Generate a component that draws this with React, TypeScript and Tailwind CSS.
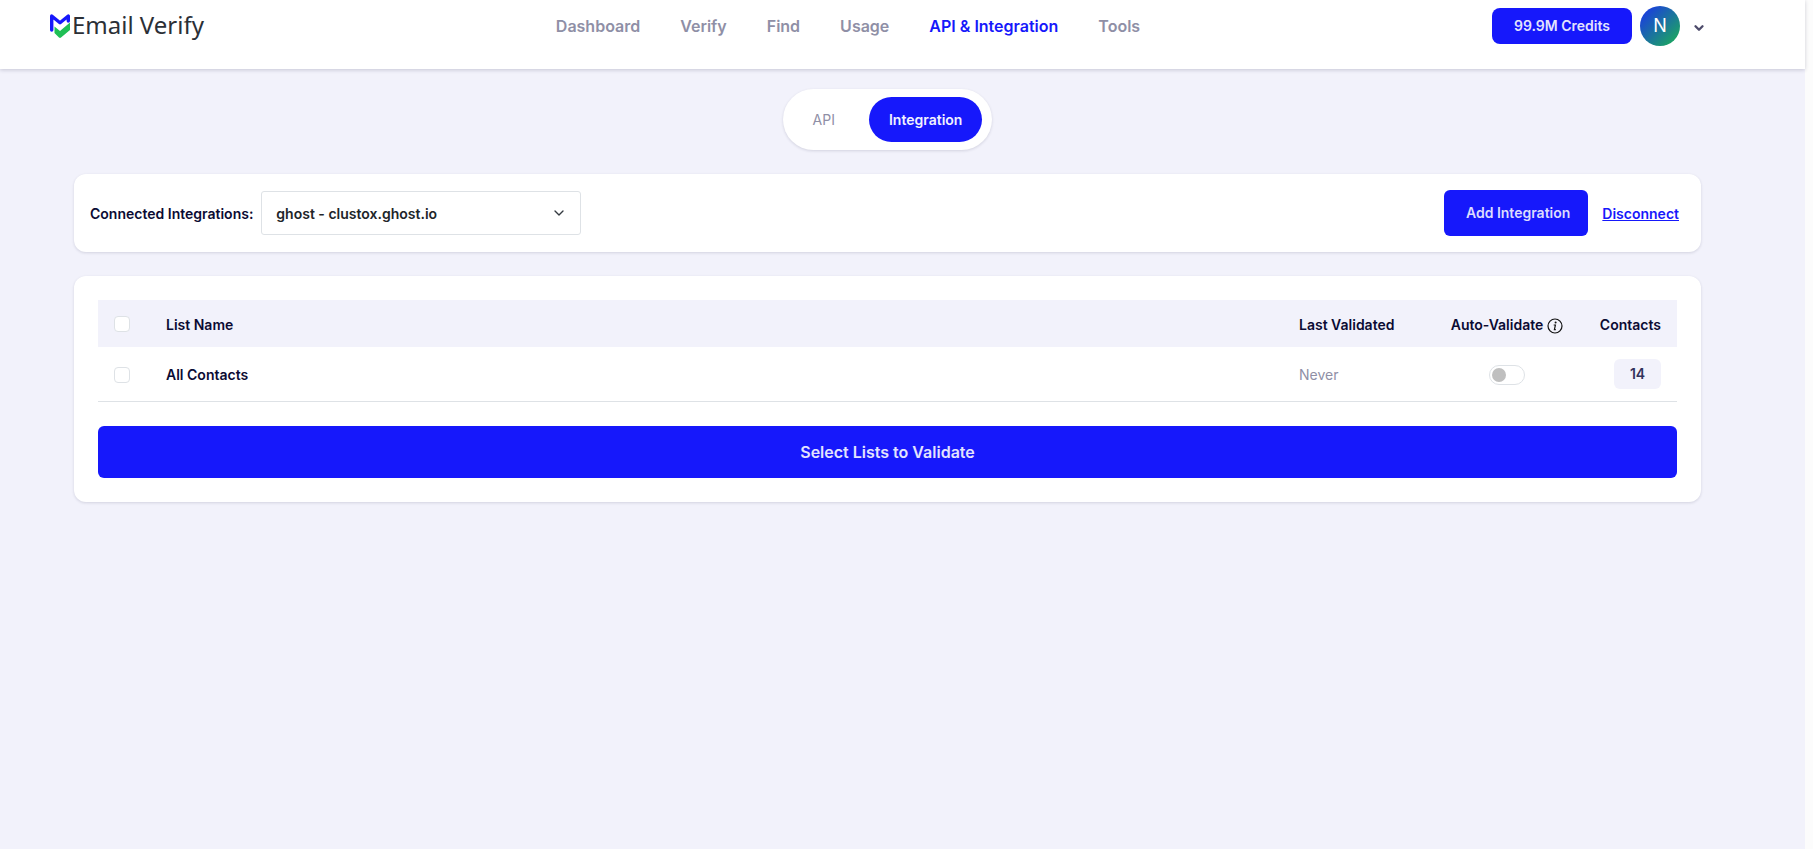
import { ChevronDown } from "lucide-react";
import { useState } from "react";

const navLinks = [
  { href: "#dashboard", label: "Dashboard" },
  { href: "#verify", label: "Verify" },
  { href: "#find", label: "Find" },
  { href: "#usage", label: "Usage" },
  { href: "#integration", label: "API & Integration", active: true },
  { href: "#tools", label: "Tools" },
];

const lists = [{ id: "all", name: "All Contacts", lastValidated: "Never", contacts: 14 }];

function Logo() {
  return (
    <a href="#home" className="flex items-start text-[#2b2f36]" aria-label="Email Verify">
      <svg width="22" height="26" viewBox="0 0 22 26" fill="none" aria-hidden="true" className="mt-px">
        <path
          d="M1.700 17V3L10 9.700L18.300 3V8"
          stroke="#1618fb"
          strokeWidth="3.400"
          strokeLinejoin="round"
          strokeLinecap="round"
        />
        <path d="M4.500 13.500L10 18L20 9.500V17L11 24.600Q10 25.400 9 24.600L4.500 20Z" fill="#1fbf55" />
      </svg>
      <span className="font-['Noto_Sans',sans-serif] text-2xl leading-[26px]">Email Verify</span>
    </a>
  );
}

function Header() {
  return (
    <header className="relative bg-white shadow-[0_1px_4px_rgba(20,20,60,0.2)]">
      <div className="flex h-[69px] items-start justify-between pr-[99px] pl-[50px]">
        <div className="pt-3">
          <Logo />
        </div>

        <nav className="flex gap-10 pt-[14px]">
          {navLinks.map((link) => (
            <a
              key={link.label}
              href={link.href}
              className={`text-base font-semibold ${link.active ? "text-[#1618fb]" : "text-[#8f8fa6]"}`}
            >
              {link.label}
            </a>
          ))}
        </nav>

        <div className="flex items-center gap-2 pt-[6px]">
          <button className="h-9 w-[140px] rounded-lg bg-[#1618fb] text-sm font-semibold text-[#e3e3fe]">
            99.9M Credits
          </button>
          <button className="flex items-center gap-3" aria-label="Account menu">
            <span className="flex size-10 items-center justify-center rounded-full bg-linear-to-br/srgb from-[#1a2ff0] to-[#1cb450] text-lg text-white">
              N
            </span>
            <ChevronDown size={14} strokeWidth={4} className="mt-1 text-[#4d4b6b]" />
          </button>
        </div>
      </div>
    </header>
  );
}

function Tabs() {
  const [tab, setTab] = useState("integration");
  const base = "h-[45px] rounded-full px-5 text-sm";
  const on = "bg-[#1618fb] font-semibold text-[#f1f1fe]";
  const off = "text-[#8f8fa6]";

  return (
    <div className="mx-auto flex w-fit gap-[14px] rounded-full bg-white px-[10px] py-2 shadow-[0_1px_3px_rgba(20,20,60,0.14)]">
      <button onClick={() => setTab("api")} className={`${base} ${tab === "api" ? on : off}`}>
        API
      </button>
      <button onClick={() => setTab("integration")} className={`${base} ${tab === "integration" ? on : off}`}>
        Integration
      </button>
    </div>
  );
}

function ConnectedBar() {
  return (
    <section className="mt-6 flex items-center justify-between rounded-xl bg-white py-4 pr-[22px] pl-4 shadow-[0_1px_3px_rgba(20,20,60,0.14)]">
      <div className="flex items-center gap-2">
        <label htmlFor="integration" className="pt-[2px] text-sm font-semibold text-[#0b0b33]">
          Connected Integrations:
        </label>
        <div className="relative">
          <select
            id="integration"
            className="h-11 w-80 appearance-none rounded-[3px] border border-[#dee2e6] bg-white pt-[2px] pr-10 pl-[14px] text-sm font-semibold text-[#212529]"
          >
            <option>ghost - clustox.ghost.io</option>
          </select>
          <ChevronDown
            size={16}
            className="pointer-events-none absolute top-[14px] right-[14px] text-[#343a40]"
          />
        </div>
      </div>

      <div className="flex items-center gap-[14px]">
        <button className="h-[46px] rounded-md bg-[#1618fb] pr-[18px] pl-[22px] text-sm font-semibold text-[#dcdcfe]">
          Add Integration
        </button>
        <a href="#disconnect" className="pt-[2px] text-sm font-semibold text-[#1618fb] underline">
          Disconnect
        </a>
      </div>
    </section>
  );
}

function Checkbox({ label }: { label: string }) {
  return (
    <input
      type="checkbox"
      aria-label={label}
      className="block size-4 appearance-none rounded-[4px] border border-[#dee2e6] bg-white checked:border-[#1618fb] checked:bg-[#1618fb]"
    />
  );
}

function InfoIcon() {
  return (
    <svg width="16" height="16" viewBox="0 0 16 16" fill="none" aria-hidden="true">
      <circle cx="8" cy="8" r="7" stroke="#111" strokeWidth="1.200" />
      <circle cx="8.600" cy="4.600" r="1" fill="#111" />
      <path d="M6.700 7h1.700L7.400 11.700h1.400" stroke="#111" strokeWidth="1.200" />
    </svg>
  );
}

function ListTable() {
  return (
    <section className="mt-6 rounded-xl bg-white p-6 shadow-[0_1px_3px_rgba(20,20,60,0.14)]">
      <table className="w-full text-left text-sm text-[#0b0b33]">
        <thead>
          <tr className="h-[47px] bg-[#f2f2fb]">
            <th className="w-[52px] pl-4">
              <Checkbox label="Select all lists" />
            </th>
            <th className="px-4 pt-[2px] font-semibold">List Name</th>
            <th className="w-[148px] px-4 pt-[2px] font-semibold">Last Validated</th>
            <th className="w-[152px] pt-[2px] font-semibold">
              <span className="flex items-center justify-center gap-1">
                Auto-Validate
                <span className="pt-[3px]">
                  <InfoIcon />
                </span>
              </span>
            </th>
            <th className="w-[94px] pt-[2px] pr-4 text-right font-semibold">Contacts</th>
          </tr>
        </thead>
        <tbody>
          {lists.map((list) => (
            <tr key={list.id} className="h-[54px] border-b border-[#dee2e6]">
              <td className="pt-[2px] pl-4">
                <Checkbox label={`Select ${list.name}`} />
              </td>
              <td className="px-4 pt-[2px] font-semibold">{list.name}</td>
              <td className="px-4 pt-[2px] text-[#8f8fa6]">{list.lastValidated}</td>
              <td className="pt-[2px]">
                <input
                  type="checkbox"
                  role="switch"
                  aria-label={`Auto-validate ${list.name}`}
                  className="mx-auto flex h-5 w-9 appearance-none items-center rounded-full border border-[#dee2e6] bg-white px-[2px] before:size-[14px] before:rounded-full before:bg-[#bfbfbf] checked:justify-end checked:before:bg-[#1618fb]"
                />
              </td>
              <td className="pr-4">
                <span className="ml-auto flex h-[30px] w-[47px] items-center justify-center rounded-md bg-[#f2f2fb] font-semibold text-[#33335c]">
                  {list.contacts}
                </span>
              </td>
            </tr>
          ))}
        </tbody>
      </table>

      <button className="mt-6 h-[52px] w-full rounded-md bg-[#1618fb] text-base font-semibold text-[#e3e3fe]">
        Select Lists to Validate
      </button>
    </section>
  );
}

export default function App() {
  return (
    <div className="min-h-screen bg-[#fcfcfc] pr-2 font-['Inter',sans-serif]">
      <div className="min-h-screen bg-[#f2f2fb]">
        <Header />
        <main className="pt-5 pr-[104px] pb-10 pl-[74px]">
          <Tabs />
          <ConnectedBar />
          <ListTable />
        </main>
      </div>
    </div>
  );
}
